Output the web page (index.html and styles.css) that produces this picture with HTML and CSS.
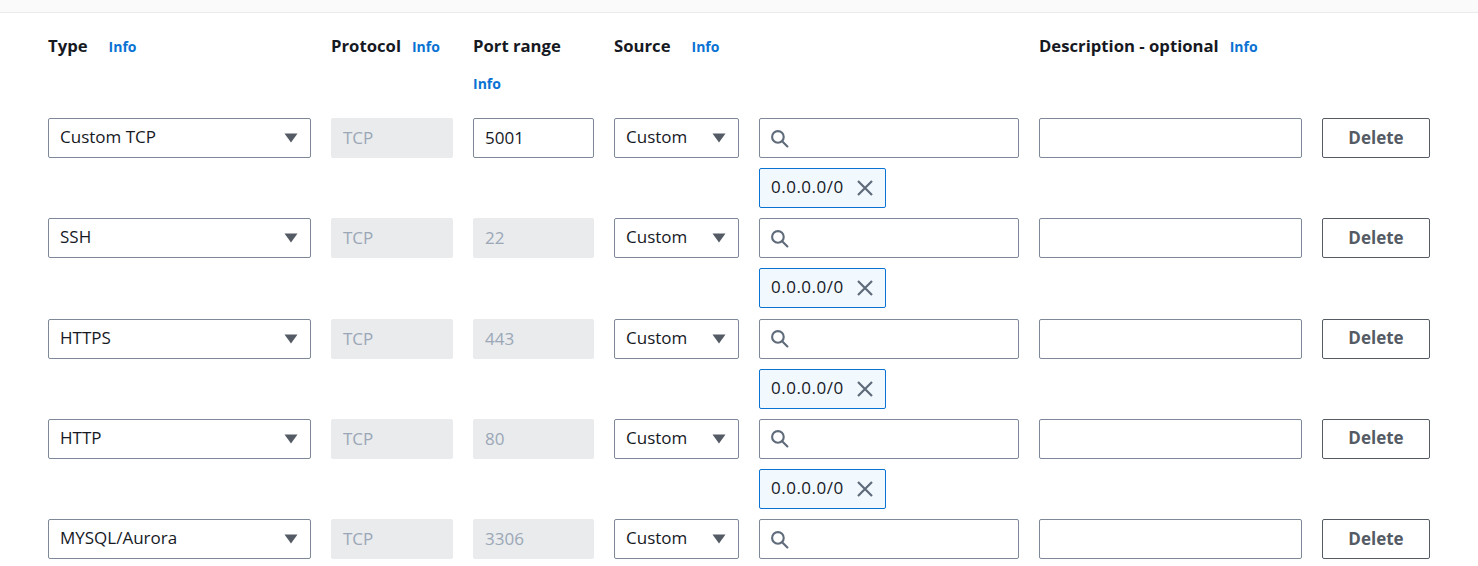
FILE: index.html
```html
<!DOCTYPE html>
<html lang="en">
<head>
<meta charset="utf-8">
<title>Inbound rules</title>
<link rel="stylesheet" href="styles.css">
</head>
<body>
<div class="topbar"></div>
<div class="rules">
  <div class="grid head">
    <div class="hcell"><span class="label wide">Type</span><a class="info">Info</a></div>
    <div class="hcell"><span class="label">Protocol</span><a class="info">Info</a></div>
    <div class="hcell stack"><span class="label">Port range</span><a class="info">Info</a></div>
    <div class="hcell span2"><span class="label wide">Source</span><a class="info">Info</a></div>
    <div class="hcell"><span class="label">Description - optional</span><a class="info">Info</a></div>
    <div></div>
  </div>

  <div class="list">
    <div class="grid rule">
      <div class="select"><span>Custom TCP</span><svg class="caret" viewBox="0 0 14 10"><path d="M0.5 0.5h13L7 9.5z"/></svg></div>
      <div class="field disabled">TCP</div>
      <div class="field">5001</div>
      <div class="select"><span>Custom</span><svg class="caret" viewBox="0 0 14 10"><path d="M0.5 0.5h13L7 9.5z"/></svg></div>
      <div class="srccol">
        <div class="field search"><svg class="sicon" viewBox="0 0 18 18"><circle cx="7.5" cy="7.5" r="5.5"/><path d="M11.5 11.5l5 5"/></svg></div>
        <div class="token"><span>0.0.0.0/0</span><svg class="xicon" viewBox="0 0 16 16"><path d="M1 1l14 14M15 1L1 15"/></svg></div>
      </div>
      <div class="field"></div>
      <button class="delete">Delete</button>
    </div>

    <div class="grid rule">
      <div class="select"><span>SSH</span><svg class="caret" viewBox="0 0 14 10"><path d="M0.5 0.5h13L7 9.5z"/></svg></div>
      <div class="field disabled">TCP</div>
      <div class="field disabled">22</div>
      <div class="select"><span>Custom</span><svg class="caret" viewBox="0 0 14 10"><path d="M0.5 0.5h13L7 9.5z"/></svg></div>
      <div class="srccol">
        <div class="field search"><svg class="sicon" viewBox="0 0 18 18"><circle cx="7.5" cy="7.5" r="5.5"/><path d="M11.5 11.5l5 5"/></svg></div>
        <div class="token"><span>0.0.0.0/0</span><svg class="xicon" viewBox="0 0 16 16"><path d="M1 1l14 14M15 1L1 15"/></svg></div>
      </div>
      <div class="field"></div>
      <button class="delete">Delete</button>
    </div>

    <div class="grid rule">
      <div class="select"><span>HTTPS</span><svg class="caret" viewBox="0 0 14 10"><path d="M0.5 0.5h13L7 9.5z"/></svg></div>
      <div class="field disabled">TCP</div>
      <div class="field disabled">443</div>
      <div class="select"><span>Custom</span><svg class="caret" viewBox="0 0 14 10"><path d="M0.5 0.5h13L7 9.5z"/></svg></div>
      <div class="srccol">
        <div class="field search"><svg class="sicon" viewBox="0 0 18 18"><circle cx="7.5" cy="7.5" r="5.5"/><path d="M11.5 11.5l5 5"/></svg></div>
        <div class="token"><span>0.0.0.0/0</span><svg class="xicon" viewBox="0 0 16 16"><path d="M1 1l14 14M15 1L1 15"/></svg></div>
      </div>
      <div class="field"></div>
      <button class="delete">Delete</button>
    </div>

    <div class="grid rule">
      <div class="select"><span>HTTP</span><svg class="caret" viewBox="0 0 14 10"><path d="M0.5 0.5h13L7 9.5z"/></svg></div>
      <div class="field disabled">TCP</div>
      <div class="field disabled">80</div>
      <div class="select"><span>Custom</span><svg class="caret" viewBox="0 0 14 10"><path d="M0.5 0.5h13L7 9.5z"/></svg></div>
      <div class="srccol">
        <div class="field search"><svg class="sicon" viewBox="0 0 18 18"><circle cx="7.5" cy="7.5" r="5.5"/><path d="M11.5 11.5l5 5"/></svg></div>
        <div class="token"><span>0.0.0.0/0</span><svg class="xicon" viewBox="0 0 16 16"><path d="M1 1l14 14M15 1L1 15"/></svg></div>
      </div>
      <div class="field"></div>
      <button class="delete">Delete</button>
    </div>

    <div class="grid rule">
      <div class="select"><span>MYSQL/Aurora</span><svg class="caret" viewBox="0 0 14 10"><path d="M0.5 0.5h13L7 9.5z"/></svg></div>
      <div class="field disabled">TCP</div>
      <div class="field disabled">3306</div>
      <div class="select"><span>Custom</span><svg class="caret" viewBox="0 0 14 10"><path d="M0.5 0.5h13L7 9.5z"/></svg></div>
      <div class="srccol">
        <div class="field search"><svg class="sicon" viewBox="0 0 18 18"><circle cx="7.5" cy="7.5" r="5.5"/><path d="M11.5 11.5l5 5"/></svg></div>
      </div>
      <div class="field"></div>
      <button class="delete">Delete</button>
    </div>
  </div>
</div>
</body>
</html>
```

FILE: styles.css
```css
* { box-sizing: border-box; }

html, body {
  margin: 0;
  padding: 0;
  background: #ffffff;
  color: #16191f;
  font-family: "Open Sans", "Noto Sans", "Liberation Sans", sans-serif;
  font-size: 17px;
}

.topbar {
  height: 13px;
  background: #fafafa;
  border-bottom: 1px solid #e9ebed;
}

.rules {
  padding: 22px 0 0 48px;
}

.grid {
  display: grid;
  grid-template-columns: 263px 122px 121px 125px 260px 263px 108px;
  column-gap: 20px;
}

.head {
  margin-bottom: 23px;
}

.hcell {
  display: flex;
  flex-wrap: wrap;
  align-items: baseline;
  row-gap: 16px;
  line-height: 22px;
}

.hcell.stack {
  flex-direction: column;
  align-items: flex-start;
}

.hcell.span2 {
  grid-column: span 2;
}

.label {
  font-weight: 700;
  font-size: 16.7px;
  margin-right: 11px;
  color: #16191f;
}

.label.wide {
  margin-right: 21px;
}

.info {
  font-weight: 700;
  font-size: 14px;
  color: #0972d3;
  text-decoration: none;
}

.list {
  display: flex;
  flex-direction: column;
  row-gap: 10.25px;
}

.rule {
  align-items: start;
}

.select,
.field {
  height: 40px;
  border: 1px solid #7d8998;
  border-radius: 2px;
  background: #ffffff;
  line-height: 37px;
  padding: 0 12px 0 11px;
  white-space: nowrap;
}

.select {
  display: flex;
  align-items: center;
  justify-content: space-between;
  line-height: 22px;
}

.select span {
  margin-bottom: 2px;
}

.caret {
  width: 14px;
  height: 10px;
  fill: #545b64;
  flex: none;
}

.field.disabled {
  background: #e9ebed;
  border-color: #e9ebed;
  color: #9ba7b6;
}

.srccol {
  display: flex;
  flex-direction: column;
  align-items: flex-start;
  row-gap: 10px;
}

.search {
  width: 100%;
  display: flex;
  align-items: center;
  padding-left: 10px;
}

.sicon {
  width: 19px;
  height: 19px;
  fill: none;
  stroke: #5f6b7a;
  stroke-width: 2;
  stroke-linecap: round;
}

.token {
  height: 40px;
  display: flex;
  align-items: center;
  column-gap: 13px;
  padding: 0 12px 0 11px;
  border: 1px solid #0972d3;
  border-radius: 2px;
  background: #f1f8fe;
  color: #16191f;
  line-height: 22px;
}

.token span {
  letter-spacing: 0.5px;
  margin-bottom: 2px;
}

.xicon {
  width: 16px;
  height: 16px;
  fill: none;
  stroke: #5f6b7a;
  stroke-width: 2.2;
  flex: none;
}

.delete {
  height: 40px;
  width: 108px;
  border: 1px solid #545b64;
  border-radius: 2px;
  background: #ffffff;
  color: #545b64;
  font-family: inherit;
  font-size: 17px;
  font-weight: 700;
  line-height: 36px;
  padding: 0 0 1px;
}
```
